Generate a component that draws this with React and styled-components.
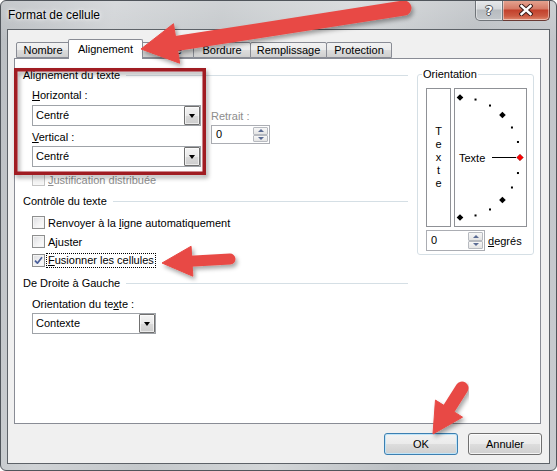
import React from 'react';
import styled, { createGlobalStyle } from 'styled-components';

const Global = createGlobalStyle`
  html, body { margin: 0; padding: 0; background: #fff; }
  body { font-family: "Liberation Sans", Arial, sans-serif; font-size: 11px; color: #000; }
  * { box-sizing: border-box; }
`;

const Window = styled.div`
  position: relative;
  width: 557px;
  height: 471px;
  display: flex;
  flex-direction: column;
  padding: 0 6px 6px 6px;
  border: 1px solid #50555b;
  border-radius: 6px;
  overflow: hidden;
  background:
    linear-gradient(to bottom, rgba(255,255,255,0.18), rgba(255,255,255,0) 40px),
    linear-gradient(100deg, #b9bdc1 0%, #cfd2d5 18%, #c4c8cb 35%, #d3d6d8 55%, #bcc0c4 75%, #c9ccd0 100%);
`;

const TitleBar = styled.div`
  height: 28px;
  display: flex;
  align-items: flex-start;
`;

const Title = styled.div`
  margin: 7px 0 0 1px;
  font-size: 12px;
  line-height: 15px;
  color: #000;
  text-shadow: 0 0 6px #fff, 0 0 3px rgba(255,255,255,0.9);
`;

const CaptionButtons = styled.div`
  margin-left: auto;
  margin-top: -1px;
  display: flex;
`;

const CaptionButton = styled.div`
  width: ${p => p.$w}px;
  height: 21px;
  display: flex;
  align-items: center;
  justify-content: center;
  border: 1px solid ${p => (p.$close ? '#6a3a34' : '#6f7479')};
  border-top: none;
  border-left: ${p => (p.$close ? 'none' : undefined)};
  border-radius: ${p => (p.$close ? '0 0 5px 0' : '0 0 0 5px')};
  background: ${p =>
    p.$close
      ? 'linear-gradient(to bottom, #e6a794 0%, #d57965 45%, #c2402b 50%, #cc5a42 80%, #e08a70 100%)'
      : 'linear-gradient(to bottom, #e8eaec 0%, #d5d8db 45%, #b7bbbf 50%, #c3c7cb 100%)'};
  box-shadow: inset 0 0 0 1px rgba(255,255,255,0.45);
`;

const HelpGlyph = styled.span`
  font-family: "DejaVu Sans", sans-serif;
  font-weight: bold;
  font-size: 13px;
  line-height: 13px;
  color: #fff;
  text-shadow: 1px 0 0 #4b5056, -1px 0 0 #4b5056, 0 1px 0 #4b5056, 0 -1px 0 #4b5056;
`;

const Client = styled.div`
  flex: 1;
  display: flex;
  flex-direction: column;
  border: 1px solid #5d6268;
  background: #f0f0f0;
  padding: 9px 8px 0 6px;
`;

const TabStrip = styled.div`
  height: 19px;
  display: flex;
  align-items: flex-end;
  padding-left: 2px;
  position: relative;
  z-index: 2;
`;

const Tab = styled.div`
  position: relative;
  width: ${p => p.$w}px;
  height: ${p => (p.$active ? 20 : 16)}px;
  margin: ${p => (p.$active ? '0 -2px -1px -2px' : p.$first ? '0' : '0 0 0 -1px')};
  z-index: ${p => (p.$active ? 3 : 1)};
  border: 1px solid #898c95;
  border-bottom: ${p => (p.$active ? 'none' : '1px solid #898c95')};
  border-radius: 2px 2px 0 0;
  background: ${p =>
    p.$active ? '#fff' : 'linear-gradient(to bottom, #f2f2f2 0%, #ebebeb 50%, #dddddd 50%, #cfcfcf 100%)'};
  display: flex;
  justify-content: center;
  align-items: ${p => (p.$active ? 'flex-start' : 'center')};
  padding-top: ${p => (p.$active ? '2px' : '0')};
  line-height: 14px;
  white-space: nowrap;
`;

const Panel = styled.div`
  height: 366px;
  border: 1px solid #898c95;
  background: #fff;
  display: flex;
  padding: 9px 6px 0 8px;
`;

const LeftCol = styled.div`
  width: 385px;
  display: flex;
  flex-direction: column;
`;

const RightCol = styled.div`
  width: 117px;
  margin-left: 9px;
  margin-top: 6px;
`;

const GroupHeading = styled.div`
  display: flex;
  align-items: center;
  height: 15px;
  line-height: 15px;
  margin-top: ${p => p.$mt || 0}px;
  white-space: nowrap;
  &::after {
    content: '';
    flex: 1;
    height: 1px;
    background: #d5dfe5;
    margin-left: 6px;
  }
`;

const Indent = styled.div`
  margin-left: 9px;
  display: flex;
  flex-direction: column;
  align-items: flex-start;
`;

const AlignRow = styled.div`
  display: flex;
  margin-top: 5px;
`;

const SubCol = styled.div`
  display: flex;
  flex-direction: column;
  align-items: flex-start;
  margin-left: ${p => p.$ml || 0}px;
  padding-top: ${p => p.$pt || 0}px;
`;

const FieldLabel = styled.div`
  height: 15px;
  line-height: 15px;
  margin-top: ${p => p.$mt || 0}px;
  color: ${p => (p.$disabled ? '#8d8d8d' : '#000')};
  white-space: nowrap;
`;

const Key = styled.span`
  text-decoration: underline;
  text-underline-offset: 1px;
`;

const Combo = styled.div`
  width: ${p => p.$w}px;
  height: 21px;
  margin-top: ${p => p.$mt || 0}px;
  border: 1px solid #9fa3a8;
  background: #fff;
  display: flex;
  align-items: stretch;
`;

const ComboText = styled.div`
  flex: 1;
  padding-left: 3px;
  line-height: 19px;
`;

const ComboButton = styled.div`
  width: 16px;
  border: 1px solid #707070;
  border-radius: 1px;
  background: linear-gradient(to bottom, #f4f4f4 0%, #e9e9e9 50%, #dadada 51%, #cdcdcd 100%);
  display: flex;
  align-items: center;
  justify-content: center;
  box-shadow: inset 0 0 0 1px rgba(255,255,255,0.6);
`;

const DownTriangle = styled.span`
  width: 0;
  height: 0;
  border-left: 3.5px solid transparent;
  border-right: 3.5px solid transparent;
  border-top: 4px solid #000;
  margin-top: 1px;
`;

const NumBox = styled.div`
  width: 59px;
  height: ${p => p.$h}px;
  margin-top: ${p => p.$mt || 0}px;
  border: 1px solid #abadb3;
  background: #fff;
  display: flex;
`;

const NumValue = styled.div`
  flex: 1;
  padding-left: 4px;
  line-height: ${p => p.$h - 2}px;
`;

const SpinCol = styled.div`
  width: 16px;
  display: flex;
  flex-direction: column;
  padding: 1px 1px 1px 0;
  gap: 0;
`;

const SpinHalf = styled.div`
  flex: 1;
  border: 1px solid #b7bac0;
  border-radius: 1px;
  background: linear-gradient(to bottom, #f7f7f7, #e4e4e4);
  display: flex;
  align-items: center;
  justify-content: center;
`;

const SpinArrow = styled.span`
  width: 0;
  height: 0;
  border-left: 3px solid transparent;
  border-right: 3px solid transparent;
  ${p => (p.$up ? 'border-bottom: 3px solid #5a6b93;' : 'border-top: 3px solid #5a6b93;')}
`;

const CheckRow = styled.div`
  height: 15px;
  display: flex;
  align-items: center;
  margin-top: ${p => p.$mt || 0}px;
  white-space: nowrap;
  color: ${p => (p.$disabled ? '#8d8d8d' : '#000')};
`;

const Box = styled.span`
  width: 13px;
  height: 13px;
  flex: none;
  border: 1px solid ${p => (p.$disabled ? '#c4c4c4' : '#8e8f8f')};
  background: ${p =>
    p.$disabled ? '#f4f4f4' : 'linear-gradient(135deg, #dcdde0 0%, #f2f2f3 55%, #fdfdfd 100%)'};
  box-shadow: inset 0 0 0 1px ${p => (p.$disabled ? '#f7f7f7' : '#f4f4f4')};
  margin-right: 3px;
  display: flex;
  align-items: center;
  justify-content: center;
`;

const FocusText = styled.span`
  outline: 1px dotted #000;
  outline-offset: 0;
  padding: 0 1px;
  margin-left: -1px;
  line-height: 13px;
`;

const OrientGroup = styled.div`
  height: 181px;
  border: 1px solid #d5dfe5;
  border-radius: 3px;
  display: flex;
  flex-direction: column;
  padding: 0 0 0 8px;
`;

const Legend = styled.div`
  align-self: flex-start;
  margin: -8px 0 0 -4px;
  padding: 0 1px;
  background: #fff;
  line-height: 15px;
`;

const OrientRow = styled.div`
  display: flex;
  margin-top: 6px;
  height: 139px;
`;

const VerticalBox = styled.div`
  width: 25px;
  border: 1px solid #8f9196;
  display: flex;
  flex-direction: column;
  align-items: center;
  justify-content: center;
  line-height: 13px;
  padding-bottom: 1px;
`;

const DialBox = styled.div`
  width: 73px;
  margin-left: 3px;
  border: 1px solid #8f9196;
`;

const DegRow = styled.div`
  display: flex;
  align-items: center;
  margin-top: 3px;
`;

const DegLabel = styled.span`
  margin-left: 3px;
`;

const ButtonRow = styled.div`
  display: flex;
  justify-content: flex-end;
  gap: 10px;
  margin: 9px -1px 0 0;
`;

const Button = styled.div`
  width: 74px;
  height: 22px;
  border: 1px solid ${p => (p.$default ? '#3c7fb1' : '#707070')};
  border-radius: 3px;
  background: linear-gradient(to bottom, #f2f2f2 0%, #ebebeb 48%, #dddddd 52%, #cfcfcf 100%);
  box-shadow: inset 0 0 0 1px ${p => (p.$default ? '#bfe4f8' : 'rgba(255,255,255,0.75)')};
  display: flex;
  align-items: center;
  justify-content: center;
  line-height: 14px;
`;

const Overlay = styled.svg`
  position: absolute;
  left: 0;
  top: 0;
  pointer-events: none;
  z-index: 10;
`;

function Check() {
  return (
    <svg width="9" height="9" viewBox="0 0 9 9">
      <path d="M1 4.6 L3.4 7.2 L8 1.2" fill="none" stroke="#4a5f9a" strokeWidth="1.7" strokeLinejoin="round" />
    </svg>
  );
}

function Spinner() {
  return (
    <SpinCol>
      <SpinHalf><SpinArrow $up /></SpinHalf>
      <SpinHalf><SpinArrow /></SpinHalf>
    </SpinCol>
  );
}

function Dial() {
  const cx = 5, cy = 68.5, r = 60;
  const marks = [];
  for (let a = 90; a >= -90; a -= 15) {
    const rad = (a * Math.PI) / 180;
    const x = cx + r * Math.cos(rad);
    const y = cy - r * Math.sin(rad);
    if (a % 45 === 0) {
      const s = 3.3;
      marks.push(
        <polygon
          key={a}
          points={`${x},${y - s} ${x + s},${y} ${x},${y + s} ${x - s},${y}`}
          fill={a === 0 ? '#ff0000' : '#000'}
          stroke={a === 0 ? '#7a0000' : 'none'}
          strokeWidth="0.5"
        />
      );
    } else {
      marks.push(<rect key={a} x={x - 1} y={y - 1} width="2" height="2" fill="#000" />);
    }
  }
  return (
    <svg width="71" height="137" viewBox="0 0 71 137">
      <text x="4" y="72.5" fontFamily="Liberation Sans, Arial, sans-serif" fontSize="11" fill="#000">Texte</text>
      <line x1="37" y1="68.5" x2="61" y2="68.5" stroke="#000" strokeWidth="1" />
      {marks}
    </svg>
  );
}

function arrowParts(tail, tip, shaftW, headLen, headW) {
  const dx = tip[0] - tail[0];
  const dy = tip[1] - tail[1];
  const len = Math.hypot(dx, dy);
  const ux = dx / len, uy = dy / len;
  const nx = -uy, ny = ux;
  const bx = tip[0] - ux * headLen;
  const by = tip[1] - uy * headLen;
  const head = `${tip[0]},${tip[1]} ${bx + nx * headW / 2},${by + ny * headW / 2} ${bx - nx * headW / 2},${by - ny * headW / 2}`;
  return { head, shaftEnd: [bx + ux * 2, by + uy * 2] };
}

function Arrow({ tail, tip, shaftW, headLen, headW }) {
  const { head, shaftEnd } = arrowParts(tail, tip, shaftW, headLen, headW);
  return (
    <g filter="url(#ashadow)">
      <line x1={tail[0]} y1={tail[1]} x2={shaftEnd[0]} y2={shaftEnd[1]} stroke="#e84a45" strokeWidth={shaftW} strokeLinecap="round" />
      <polygon points={head} fill="#e84a45" strokeLinejoin="round" stroke="#e84a45" strokeWidth="1" />
    </g>
  );
}

export default function App() {
  return (
    <>
      <Global />
      <Window>
        <TitleBar>
          <Title>Format de cellule</Title>
          <CaptionButtons>
            <CaptionButton $w={28}><HelpGlyph>?</HelpGlyph></CaptionButton>
            <CaptionButton $w={47} $close>
              <svg width="14" height="12" viewBox="0 0 14 12">
                <path d="M2.5 2 L11.5 10 M11.5 2 L2.5 10" stroke="#3d1d1a" strokeWidth="4.4" strokeLinecap="square" />
                <path d="M2.5 2 L11.5 10 M11.5 2 L2.5 10" stroke="#fff" strokeWidth="2.4" strokeLinecap="square" />
              </svg>
            </CaptionButton>
          </CaptionButtons>
        </TitleBar>
        <Client>
          <TabStrip>
            <Tab $w={54} $first>Nombre</Tab>
            <Tab $w={75} $active>Alignement</Tab>
            <Tab $w={54}>Police</Tab>
            <Tab $w={58}>Bordure</Tab>
            <Tab $w={77}>Remplissage</Tab>
            <Tab $w={66}>Protection</Tab>
          </TabStrip>
          <Panel>
            <LeftCol>
              <GroupHeading>Alignement du texte</GroupHeading>
              <Indent>
                <AlignRow>
                  <SubCol>
                    <FieldLabel><Key>H</Key>orizontal :</FieldLabel>
                    <Combo $w={169} $mt={2}>
                      <ComboText>Centré</ComboText>
                      <ComboButton><DownTriangle /></ComboButton>
                    </Combo>
                    <FieldLabel $mt={4}><Key>V</Key>ertical :</FieldLabel>
                    <Combo $w={169} $mt={1}>
                      <ComboText>Centré</ComboText>
                      <ComboButton><DownTriangle /></ComboButton>
                    </Combo>
                  </SubCol>
                  <SubCol $ml={10} $pt={21}>
                    <FieldLabel $disabled>Retrait :</FieldLabel>
                    <NumBox $h={19} $mt={1}>
                      <NumValue $h={19}>0</NumValue>
                      <Spinner />
                    </NumBox>
                  </SubCol>
                </AlignRow>
                <CheckRow $mt={5} $disabled>
                  <Box $disabled />
                  <span><Key>J</Key>ustification distribuée</span>
                </CheckRow>
              </Indent>

              <GroupHeading $mt={7}>Contrôle du texte</GroupHeading>
              <Indent>
                <CheckRow $mt={6}>
                  <Box />
                  <span>Renvoyer à la <Key>l</Key>igne automatiquement</span>
                </CheckRow>
                <CheckRow $mt={4}>
                  <Box />
                  <span>A<Key>j</Key>uster</span>
                </CheckRow>
                <CheckRow $mt={4}>
                  <Box><Check /></Box>
                  <FocusText><Key>F</Key>usionner les cellules</FocusText>
                </CheckRow>
              </Indent>

              <GroupHeading $mt={8}>De Droite à Gauche</GroupHeading>
              <Indent>
                <FieldLabel $mt={6}>Orientation du te<Key>x</Key>te :</FieldLabel>
                <Combo $w={124} $mt={1}>
                  <ComboText>Contexte</ComboText>
                  <ComboButton><DownTriangle /></ComboButton>
                </Combo>
              </Indent>
            </LeftCol>

            <RightCol>
              <OrientGroup>
                <Legend>Orientation</Legend>
                <OrientRow>
                  <VerticalBox>
                    <span>T</span><span>e</span><span>x</span><span>t</span><span>e</span>
                  </VerticalBox>
                  <DialBox><Dial /></DialBox>
                </OrientRow>
                <DegRow>
                  <NumBox $h={21}>
                    <NumValue $h={21}>0</NumValue>
                    <Spinner />
                  </NumBox>
                  <DegLabel><Key>d</Key>egrés</DegLabel>
                </DegRow>
              </OrientGroup>
            </RightCol>
          </Panel>
          <ButtonRow>
            <Button $default>OK</Button>
            <Button>Annuler</Button>
          </ButtonRow>
        </Client>

        <Overlay width="557" height="471" viewBox="0 0 557 471">
          <defs>
            <filter id="ashadow" x="-20%" y="-40%" width="140%" height="180%">
              <feDropShadow dx="2" dy="3" stdDeviation="2" floodColor="#000" floodOpacity="0.35" />
            </filter>
            <filter id="rshadow" x="-10%" y="-10%" width="120%" height="130%">
              <feDropShadow dx="2" dy="3" stdDeviation="2" floodColor="#000" floodOpacity="0.35" />
            </filter>
          </defs>
          <rect x="14.75" y="68.75" width="188.5" height="103.5" fill="none" stroke="#a01a22" strokeWidth="3.5" filter="url(#rshadow)" />
          <Arrow tail={[403, 7]} tip={[140, 48]} shaftW={15} headLen={36} headW={40} />
          <Arrow tail={[229, 258]} tip={[161, 262]} shaftW={11} headLen={30} headW={30} />
          <Arrow tail={[461, 387]} tip={[432, 433]} shaftW={13} headLen={30} headW={32} />
        </Overlay>
      </Window>
    </>
  );
}
